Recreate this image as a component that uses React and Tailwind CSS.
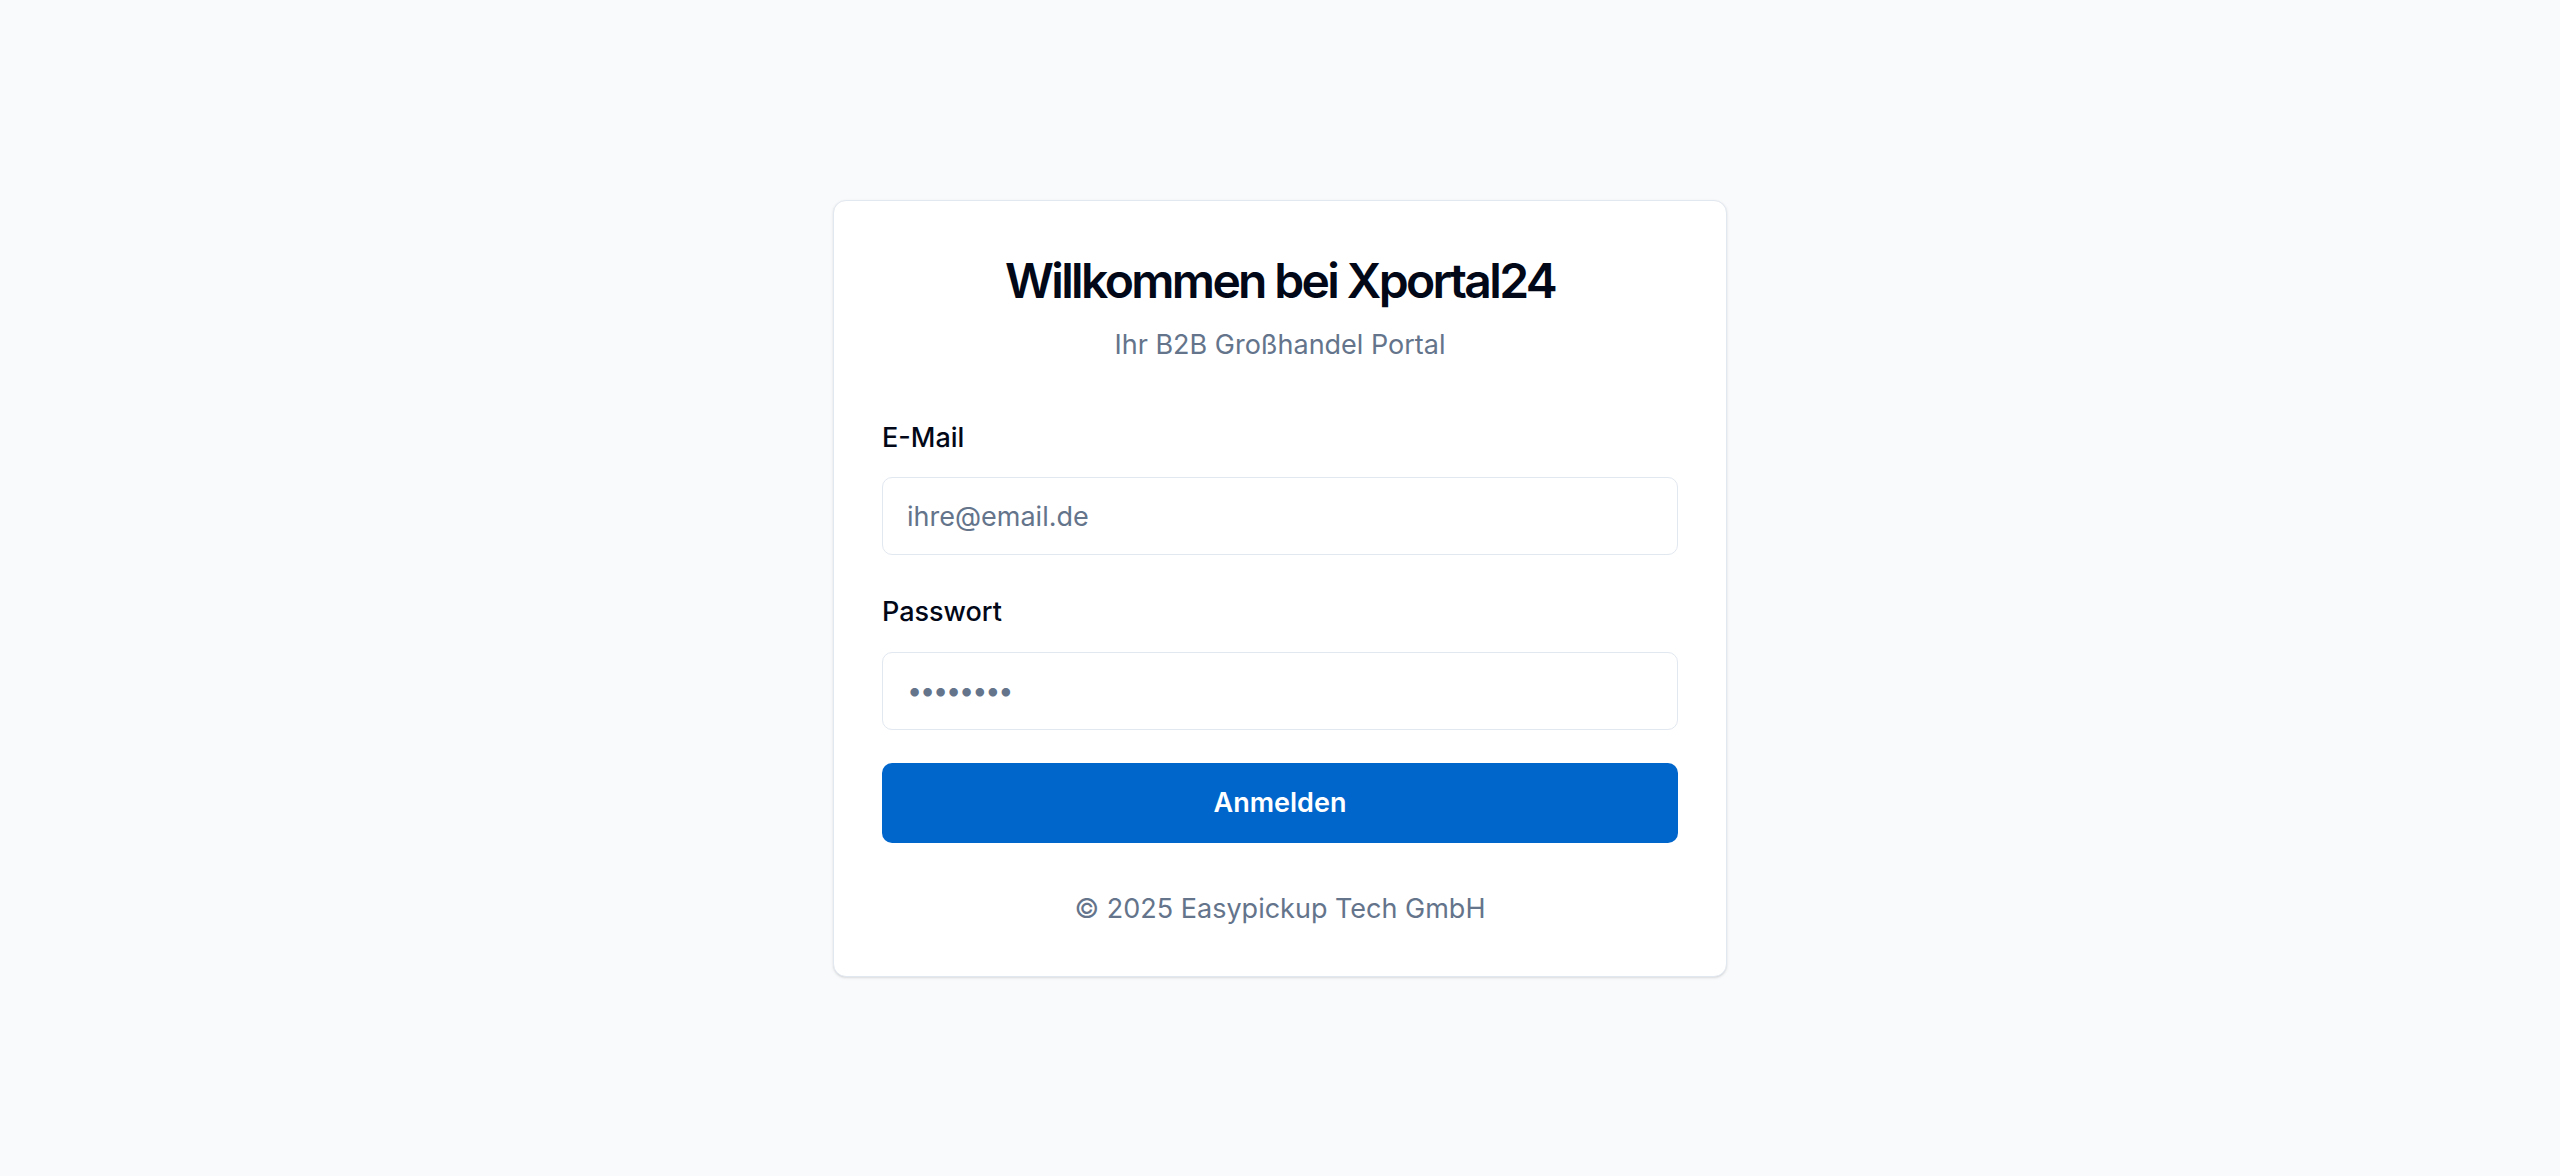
import React from 'react';

const LoginCard = () => {
    return (
        <div className="w-[894px] bg-white border-[1.6px] border-[#e2e8f0] rounded-[13px] shadow-sm px-12 pt-[51px] pb-[47px]">
            <div className="text-center">
                <h1 className="text-[48px] leading-[57.6px] font-semibold tracking-[-0.055em] text-[#020817]">
                    Willkommen bei Xportal24
                </h1>
                <p className="mt-[17px] text-[27px] leading-[38.4px] text-[#64748b]">
                    Ihr B2B Großhandel Portal
                </p>
            </div>

            <form className="mt-[54px] flex flex-col" onSubmit={(e) => e.preventDefault()}>
                <div className="flex flex-col gap-[20px]">
                    <label htmlFor="email" className="text-[27px] leading-[38.4px] font-medium text-[#020817]">
                        E-Mail
                    </label>
                    <input
                        id="email"
                        type="email"
                        placeholder="ihre@email.de"
                        className="h-[78.4px] w-full rounded-[10px] border-[1.6px] border-[#e2e8f0] bg-white px-[24px] text-[27px] text-[#020817] placeholder-[#64748b] focus:outline-none"
                    />
                </div>

                <div className="mt-[38px] flex flex-col gap-[20px]">
                    <label htmlFor="password" className="text-[27px] leading-[38.4px] font-medium text-[#020817]">
                        Passwort
                    </label>
                    <input
                        id="password"
                        type="password"
                        placeholder="••••••••"
                        className="h-[78.4px] w-full rounded-[10px] border-[1.6px] border-[#e2e8f0] bg-white px-[24px] text-[27px] tracking-[-0.08em] text-[#020817] placeholder-[#64748b] focus:outline-none"
                    />
                </div>

                <button
                    type="submit"
                    className="mt-[33px] h-[80px] w-full rounded-[10px] bg-[#0066cc] text-[27px] font-semibold text-white"
                >
                    Anmelden
                </button>
            </form>

            <p className="mt-[47px] text-center text-[27px] leading-[38.4px] text-[#64748b]">
                © 2025 Easypickup Tech GmbH
            </p>
        </div>
    );
};

export default function App() {
    return (
        <div className="min-h-screen bg-[#f8fafc] flex items-center justify-center font-['Inter',sans-serif]">
            <LoginCard />
        </div>
    );
}
